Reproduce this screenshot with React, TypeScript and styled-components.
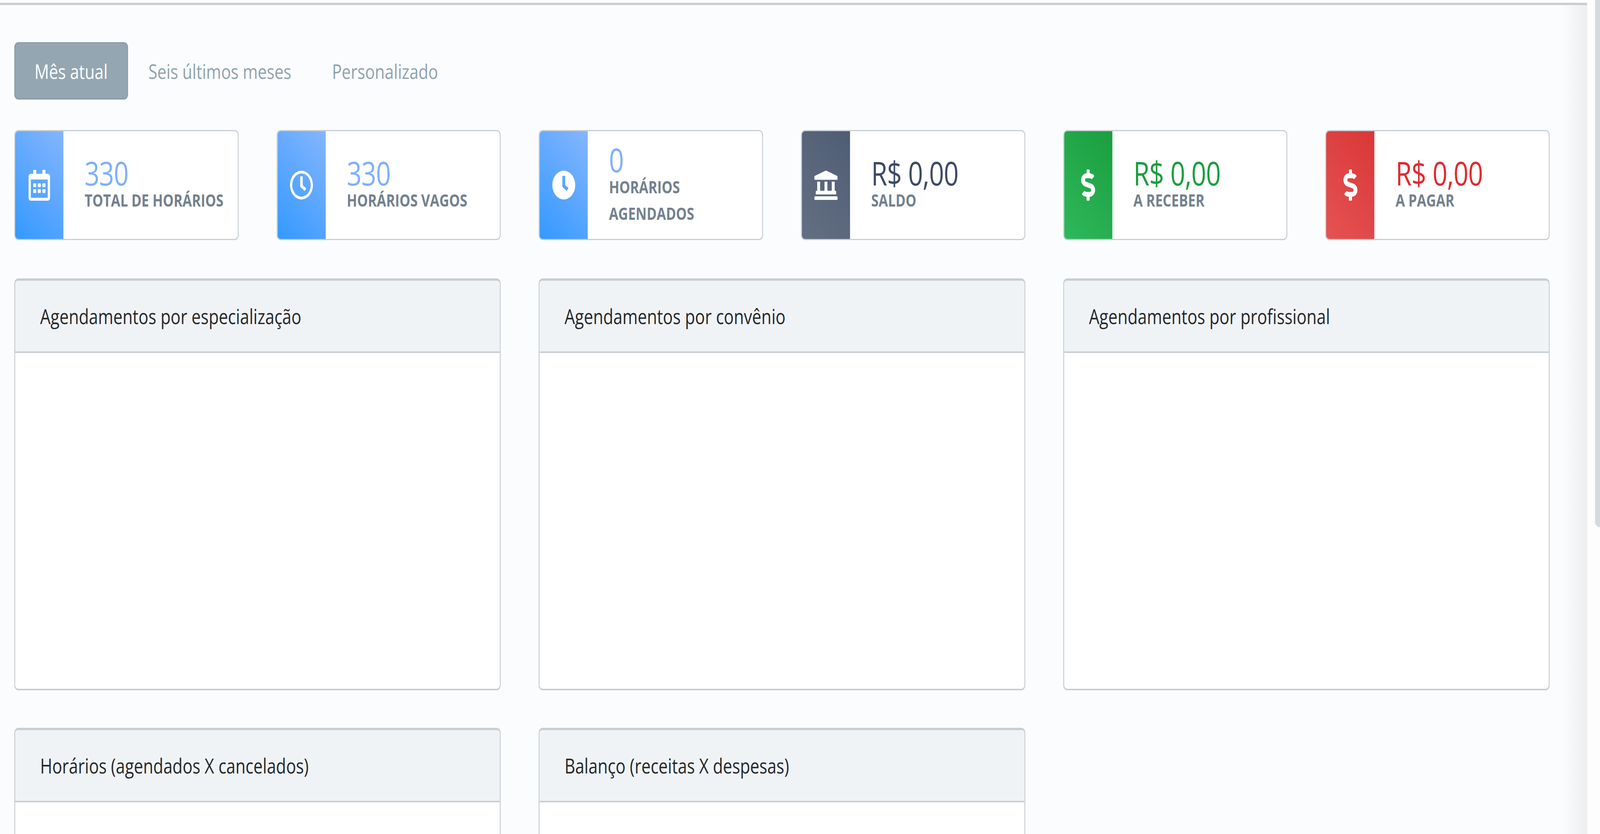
import React from "react";
import styled, { createGlobalStyle } from "styled-components";
import { FaRegCalendarAlt, FaRegClock, FaClock, FaLandmark, FaDollarSign } from "react-icons/fa";

const DESIGN_WIDTH = 5148;

const GlobalStyle = createGlobalStyle`
  * {
    box-sizing: border-box;
  }
  html,
  body {
    margin: 0;
    padding: 0;
    height: 100%;
    overflow: hidden;
    background: #fdfdfe;
    font-family: "Open Sans", "Noto Sans", "Liberation Sans", sans-serif;
    color: #23282c;
  }
`;

const Page = styled.div`
  display: flex;
  width: ${DESIGN_WIDTH}px;
  height: 2136px;
  overflow: hidden;
  transform-origin: 0 0;
`;

const Main = styled.main`
  flex: 1;
  min-width: 0;
  background: linear-gradient(to right, rgba(236, 238, 240, 0) calc(100% - 80px), #eceef0 100%), #fbfcfe;
`;

const TopBar = styled.div`
  height: 13px;
  background: #fff;
  border-bottom: 6px solid #c8ced3;
`;

const Content = styled.div`
  display: flex;
  flex-direction: column;
  padding: 95px 121px 0 46px;
`;

const Track = styled.div`
  display: flex;
  justify-content: flex-end;
  width: 41px;
  background: #fdfdfe;
`;

const Thumb = styled.div`
  width: 16px;
  height: 1350px;
  background: #d5dade;
  border-bottom-left-radius: 14px;
`;

const Tabs = styled.nav`
  display: flex;
  gap: 1px;
  margin-bottom: 78px;
`;

const Tab = styled.a<{ $active?: boolean }>`
  display: flex;
  align-items: center;
  height: 147px;
  padding: 0 62px;
  border-radius: 13px;
  border: 3px solid ${({ $active }) => ($active ? "#8a9ca8" : "transparent")};
  background: ${({ $active }) => ($active ? "#94a6b1" : "transparent")};
  color: ${({ $active }) => ($active ? "#fff" : "#8fa2ad")};
  font-size: 52px;
`;

const Stats = styled.section`
  display: grid;
  grid-template-columns: repeat(6, 1fr);
  column-gap: 122px;
  margin-bottom: 98px;
`;

const Stat = styled.div`
  display: flex;
  height: 282px;
  overflow: hidden;
  background: #fff;
  border: 3px solid #c8ced3;
  border-radius: 13px;
`;

const StatIcon = styled.div<{ $from: string; $to: string }>`
  display: flex;
  flex: none;
  align-items: center;
  justify-content: center;
  width: 155px;
  color: #fff;
  background: linear-gradient(45deg, ${({ $from }) => $from} 0%, ${({ $to }) => $to} 100%);
`;

const StatText = styled.div`
  display: flex;
  flex-direction: column;
  justify-content: center;
  padding: 6px 0 0 68px;
  min-width: 0;
`;

const StatValue = styled.div<{ $color: string }>`
  color: ${({ $color }) => $color};
  font-size: 84px;
  line-height: 72px;
  letter-spacing: -1px;
  white-space: nowrap;
`;

const StatLabel = styled.div`
  color: #73818f;
  font-size: 43.5px;
  font-weight: 700;
  line-height: 68px;
  text-transform: uppercase;
`;

const Charts = styled.section`
  display: grid;
  grid-template-columns: repeat(3, 1fr);
  column-gap: 122px;
  row-gap: 96px;
`;

const Chart = styled.article`
  display: flex;
  flex-direction: column;
  height: 1055px;
  overflow: hidden;
  background: #fff;
  border: 3px solid #c8ced3;
  border-top-width: 6px;
  border-bottom-width: 4px;
  border-radius: 13px;
`;

const ChartHeader = styled.header`
  display: flex;
  flex: none;
  align-items: center;
  height: 185px;
  padding-left: 80px;
  background: #f0f3f5;
  border-bottom: 4px solid #c8ced3;
  font-size: 53px;
`;

const ICON_BLUE = { from: "#3399ff", to: "#85b5ff", value: "#7fb0fb" };
const ICON_DARK = { from: "#636f83", to: "#4f5d73", value: "#3c4b64" };
const ICON_GREEN = { from: "#2eb85c", to: "#1b9e3e", value: "#1b9e3e" };
const ICON_RED = { from: "#e55353", to: "#d93737", value: "#e02b2f" };

const stats = [
  { icon: <FaRegCalendarAlt size={79} />, value: "330", label: "Total de horários", tone: ICON_BLUE },
  { icon: <FaRegClock size={76} />, value: "330", label: "Horários vagos", tone: ICON_BLUE },
  { icon: <FaClock size={76} />, value: "0", label: "Horários agendados", tone: ICON_BLUE },
  { icon: <FaLandmark size={75} />, value: "R$ 0,00", label: "Saldo", tone: ICON_DARK },
  { icon: <FaDollarSign size={80} />, value: "R$ 0,00", label: "A receber", tone: ICON_GREEN },
  { icon: <FaDollarSign size={80} />, value: "R$ 0,00", label: "A pagar", tone: ICON_RED },
];

const charts = [
  "Agendamentos por especialização",
  "Agendamentos por convênio",
  "Agendamentos por profissional",
  "Horários (agendados X cancelados)",
  "Balanço (receitas X despesas)",
];

export default function App() {
  // the browser may open narrower than the design width, so squeeze to fit it
  const fit = Math.min(1, window.innerWidth / DESIGN_WIDTH);

  return (
    <Page style={{ transform: `scaleX(${fit})` }}>
      <GlobalStyle />
      <Main>
        <TopBar />
        <Content>
          <Tabs>
            <Tab $active>Mês atual</Tab>
            <Tab>Seis últimos meses</Tab>
            <Tab>Personalizado</Tab>
          </Tabs>
          <Stats>
            {stats.map((stat) => (
              <Stat key={stat.label}>
                <StatIcon $from={stat.tone.from} $to={stat.tone.to}>
                  {stat.icon}
                </StatIcon>
                <StatText>
                  <StatValue $color={stat.tone.value}>{stat.value}</StatValue>
                  <StatLabel>{stat.label}</StatLabel>
                </StatText>
              </Stat>
            ))}
          </Stats>
          <Charts>
            {charts.map((title) => (
              <Chart key={title}>
                <ChartHeader>{title}</ChartHeader>
              </Chart>
            ))}
          </Charts>
        </Content>
      </Main>
      <Track>
        <Thumb />
      </Track>
    </Page>
  );
}
